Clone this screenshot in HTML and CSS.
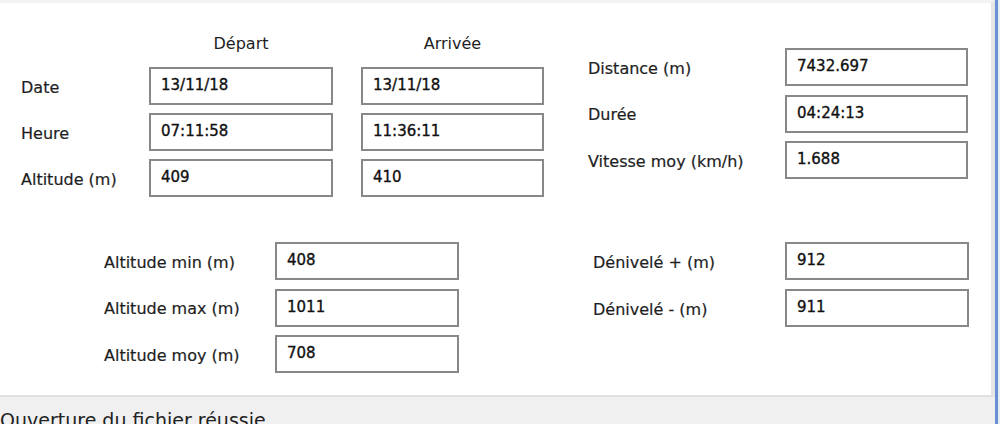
FILE: index.html
```html
<!doctype html>
<html>
<head>
	<meta charset="utf-8" />
	<title>Statistiques du parcours</title>
	<link rel="stylesheet" href="styles.css">
</head>
<body>
<div class="window">
	<div class="content">
		<div class="panel">
			<div class="top">
				<div class="grid times">
					<div></div>
					<div class="head">Départ</div>
					<div class="head">Arrivée</div>

					<div class="label">Date</div>
					<div class="box">13/11/18</div>
					<div class="box">13/11/18</div>

					<div class="label">Heure</div>
					<div class="box">07:11:58</div>
					<div class="box">11:36:11</div>

					<div class="label">Altitude (m)</div>
					<div class="box">409</div>
					<div class="box">410</div>
				</div>

				<div class="grid totals">
					<div class="label">Distance (m)</div>
					<div class="box">7432.697</div>

					<div class="label">Durée</div>
					<div class="box">04:24:13</div>

					<div class="label">Vitesse moy (km/h)</div>
					<div class="box">1.688</div>
				</div>
			</div>

			<div class="bottom">
				<div class="grid alt">
					<div class="label">Altitude min (m)</div>
					<div class="box">408</div>

					<div class="label">Altitude max (m)</div>
					<div class="box">1011</div>

					<div class="label">Altitude moy (m)</div>
					<div class="box">708</div>
				</div>

				<div class="grid deniv">
					<div class="label">Dénivelé + (m)</div>
					<div class="box">912</div>

					<div class="label">Dénivelé - (m)</div>
					<div class="box">911</div>
				</div>
			</div>
		</div>

		<div class="status">Ouverture du fichier réussie</div>
	</div>
	<div class="edge"></div>
	<div class="rest"></div>
</div>
</body>
</html>
```

FILE: styles.css
```css
html, body {
	margin:  0;
	padding: 0;

	height: 424px;
	overflow: hidden;

	background-color: #f0f0f0;

	font-family: "DejaVu Sans", Verdana, sans-serif;
	font-size: 16px;
	color: #1e1e1e;
}

div.window {
	display: flex;
	height: 424px;
	overflow: hidden;
}

div.content {
	width: 995px;
	display: flex;
	flex-direction: column;
}

div.panel {
	flex-shrink: 0;
	height: 392px;

	background-color: #fff;

	border-top:    3px solid #f3f3f3;
	border-right:  4px solid #e6e6e6;
	border-bottom: 2px solid #e1e1e1;
}

div.top {
	display: flex;
	align-items: flex-start;

	padding-top:  30px;
	padding-left: 21px;
}

div.bottom {
	display: flex;
	align-items: flex-start;

	margin-top: 45px;
}

div.grid {
	display: grid;
	align-items: center;
}

div.times {
	grid-template-columns: 100px 184px 183px;
	grid-template-rows: 26px repeat(3, 38px);
	column-gap: 28px;
	row-gap:     8px;
}

div.totals {
	grid-template-columns: 197px 183px;
	grid-template-rows: repeat(3, 38px);
	row-gap: 8.5px;

	margin-top:  15px;
	margin-left: 44px;
}

div.alt {
	grid-template-columns: 171px 184px;
	grid-template-rows: repeat(3, 38px);
	row-gap: 8.5px;

	margin-left: 104px;
}

div.deniv {
	grid-template-columns: 192px 184px;
	grid-template-rows: repeat(2, 38px);
	row-gap: 9px;

	margin-left: 134px;
}

div.head {
	align-self: start;
	text-align: center;
	line-height: 22px;
}

div.label {
	white-space: nowrap;
	padding-top: 2px;
	-webkit-text-stroke: 0.2px #1e1e1e;
}

div.box {
	height: 34px;

	border: 2px solid #888;

	padding-left: 10px;

	font-size: 15px;
	line-height: 32px;
	color: #111;
	-webkit-text-stroke: 0.35px #111;
}

div.status {
	flex-shrink: 0;
	height: 40px;

	padding-top: 12px;

	font-size: 19px;
	line-height: 22px;
	color: #222;
	white-space: nowrap;
}

div.edge {
	width: 3px;
	background-color: #6a8fd6;
}

div.rest {
	width: 2px;
	background-color: #e8ecf3;
}
```
